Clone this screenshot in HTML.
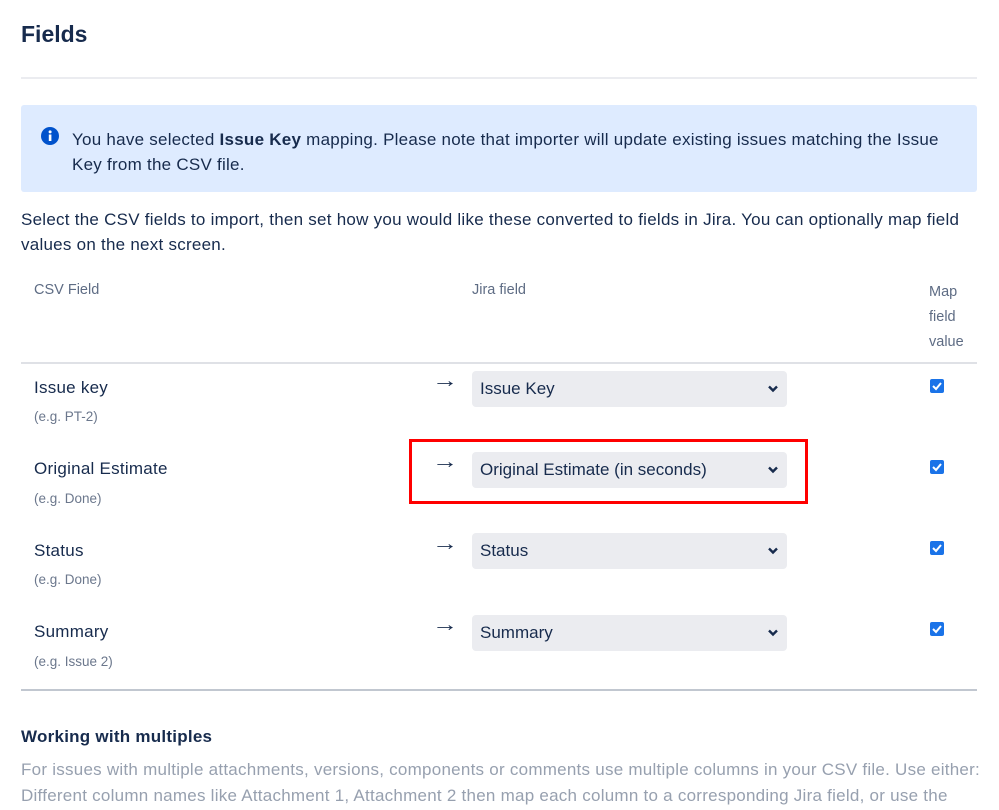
<!DOCTYPE html>
<html><head><meta charset="utf-8"><style>
body{margin:0;width:999px;height:810px;overflow:hidden;background:#fff;font-family:"Liberation Sans",sans-serif;color:#172b4d;position:relative}
.a{position:absolute;white-space:nowrap}
.t{font-size:17px;letter-spacing:0.25px}
.s{font-size:13.5px;color:#6b778c}
.h{font-size:14.5px;color:#5e6c84}
.sel{position:absolute;left:472px;width:315px;height:36px;background:#ebecf0;border-radius:4px;font-size:17px}
.sel span{position:absolute;left:8px;top:8px}
.sel svg{position:absolute;right:9px;top:14px}
.cb{position:absolute;left:930px;width:14px;height:14px;background:#1a73e8;border-radius:2px}
.arr{position:absolute;left:432px;font-size:20px;transform:scaleX(1.3);transform-origin:left}
</style></head><body>
<div class="a" style="left:21px;top:21px;font-size:23px;font-weight:bold">Fields</div>
<div class="a" style="left:21px;top:77px;width:956px;height:2px;background:#ebecf0"></div>
<div class="a" style="left:21px;top:105px;width:956px;height:87px;background:#deebff;border-radius:3px"></div>
<svg class="a" style="left:41px;top:127px" width="18" height="18" viewBox="0 0 18 18"><circle cx="9" cy="9" r="9" fill="#0052cc"/><rect x="7.8" y="7.5" width="2.6" height="6.5" fill="#fff"/><circle cx="9.1" cy="4.9" r="1.5" fill="#fff"/></svg>
<div class="a t" style="left:72px;top:127px;line-height:25px">You have selected <b>Issue Key</b> mapping. Please note that importer will update existing issues matching the Issue<br>Key from the CSV file.</div>
<div class="a t" style="left:21px;top:207px;line-height:25px">Select the CSV fields to import, then set how you would like these converted to fields in Jira. You can optionally map field<br>values on the next screen.</div>
<div class="a h" style="left:34px;top:282px">CSV Field</div>
<div class="a h" style="left:472px;top:282px">Jira field</div>
<div class="a h" style="left:929px;top:280px;line-height:25px">Map<br>field<br>value</div>
<div class="a" style="left:21px;top:362px;width:956px;height:2px;background:#dfe1e6"></div>

<div class="a t" style="left:34px;top:378px">Issue key</div><div class="a s" style="left:34px;top:409px">(e.g. PT-2)</div>
<div class="arr" style="top:370px">→</div>
<div class="sel" style="top:371px"><span>Issue Key</span><svg width="10" height="8" viewBox="0 0 10 8"><path d="M1 1.5l4 4 4-4" stroke="#172b4d" stroke-width="2.4" fill="none"/></svg></div>
<div class="cb" style="top:379px"><svg width="14" height="14"><path d="M3 7l3 3 5-6" stroke="#fff" stroke-width="2" fill="none"/></svg></div>

<div class="a t" style="left:34px;top:459px">Original Estimate</div><div class="a s" style="left:34px;top:491px">(e.g. Done)</div>
<div class="arr" style="top:451px">→</div>
<div class="sel" style="top:452px"><span>Original Estimate (in seconds)</span><svg width="10" height="8" viewBox="0 0 10 8"><path d="M1 1.5l4 4 4-4" stroke="#172b4d" stroke-width="2.4" fill="none"/></svg></div>
<div class="cb" style="top:460px"><svg width="14" height="14"><path d="M3 7l3 3 5-6" stroke="#fff" stroke-width="2" fill="none"/></svg></div>
<div class="a" style="left:409px;top:439px;width:393px;height:59px;border:3px solid #f00"></div>

<div class="a t" style="left:34px;top:541px">Status</div><div class="a s" style="left:34px;top:572px">(e.g. Done)</div>
<div class="arr" style="top:533px">→</div>
<div class="sel" style="top:533px"><span>Status</span><svg width="10" height="8" viewBox="0 0 10 8"><path d="M1 1.5l4 4 4-4" stroke="#172b4d" stroke-width="2.4" fill="none"/></svg></div>
<div class="cb" style="top:541px"><svg width="14" height="14"><path d="M3 7l3 3 5-6" stroke="#fff" stroke-width="2" fill="none"/></svg></div>

<div class="a t" style="left:34px;top:622px">Summary</div><div class="a s" style="left:34px;top:654px">(e.g. Issue 2)</div>
<div class="arr" style="top:614px">→</div>
<div class="sel" style="top:615px"><span>Summary</span><svg width="10" height="8" viewBox="0 0 10 8"><path d="M1 1.5l4 4 4-4" stroke="#172b4d" stroke-width="2.4" fill="none"/></svg></div>
<div class="cb" style="top:622px"><svg width="14" height="14"><path d="M3 7l3 3 5-6" stroke="#fff" stroke-width="2" fill="none"/></svg></div>

<div class="a" style="left:21px;top:689px;width:956px;height:2px;background:#c1c7d0"></div>
<div class="a t" style="left:21px;top:727px;font-weight:bold">Working with multiples</div>
<div class="a t" style="left:21px;top:757px;line-height:26px;color:#97a0af">For issues with multiple attachments, versions, components or comments use multiple columns in your CSV file. Use either:<br>Different column names like Attachment 1, Attachment 2 then map each column to a corresponding Jira field, or use the</div>
</body></html>
